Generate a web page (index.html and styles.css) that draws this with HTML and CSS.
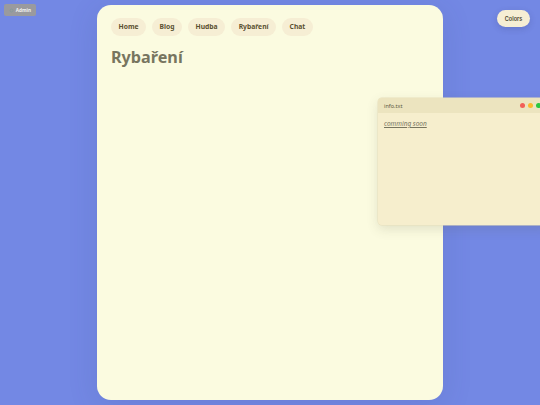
FILE: index.html
```html
<!DOCTYPE html>
<html lang="cs">
<head>
<meta charset="utf-8">
<title>Rybaření</title>
<link rel="stylesheet" href="styles.css">
</head>
<body>
<a class="admin" href="#"><svg class="admin-icon" viewBox="0 0 10 10"><circle cx="5" cy="5" r="3" fill="none" stroke="#7f9a9a" stroke-width="1.4"/></svg>Admin</a>
<button class="colors">Colors</button>
<main class="card">
  <nav class="nav">
    <a class="pill" href="#">Home</a>
    <a class="pill" href="#">Blog</a>
    <a class="pill" href="#">Hudba</a>
    <a class="pill" href="#">Rybaření</a>
    <a class="pill" href="#">Chat</a>
  </nav>
  <h1 class="title">Rybaření</h1>
</main>
<section class="window">
  <header class="titlebar">
    <span class="filename">info.txt</span>
    <span class="dots"><i class="dot red"></i><i class="dot yellow"></i><i class="dot green"></i></span>
  </header>
  <div class="window-body"><a class="soon" href="#">comming soon</a></div>
</section>
</body>
</html>
```
FILE: styles.css
```css
* { box-sizing: border-box; }
html, body { height: 100%; }
body {
  margin: 0;
  background: #7388e4;
  font-family: "Noto Sans", sans-serif;
  overflow: hidden;
  position: relative;
  padding: 5px 97px;
}
.card {
  height: 395px;
  background: #fbfbe0;
  border-radius: 14px;
  padding: 13px 14px;
  box-shadow: 0 6px 30px rgba(60, 70, 130, 0.14);
}
.nav { display: flex; gap: 6px; }
.pill {
  height: 18px;
  padding: 0 7.5px;
  border-radius: 9px;
  background: #f6eed4;
  color: #5a5030;
  font-size: 6.75px;
  font-weight: 700;
  line-height: 18px;
  text-decoration: none;
  white-space: nowrap;
}
.title {
  margin: 9px 0 0;
  font-size: 16.2px;
  line-height: 24px;
  font-weight: 700;
  color: #77755f;
}
.admin {
  position: absolute;
  left: 4px;
  top: 4px;
  width: 32px;
  height: 12px;
  display: flex;
  align-items: center;
  justify-content: flex-end;
  gap: 2px;
  padding-right: 5px;
  background: #9a9a9e;
  border-radius: 2px;
  color: #f2f2f2;
  font-size: 4.7px;
  font-weight: 700;
  text-decoration: none;
}
.admin-icon { width: 5px; height: 5px; }
.colors {
  position: absolute;
  left: 497px;
  top: 10px;
  width: 33px;
  height: 17px;
  padding: 0;
  border: 0;
  border-radius: 8.5px;
  background: #f6eed4;
  color: #4a4530;
  font-family: Inter, sans-serif;
  font-size: 5.5px;
  font-weight: 600;
  box-shadow: 0 2px 6px rgba(50, 50, 100, 0.2);
}
.window {
  position: absolute;
  left: 378px;
  top: 98px;
  width: 170px;
  height: 126.5px;
  background: #f6eecd;
  border-radius: 4px;
  box-shadow: 0 0 0 0.5px #e8e0bc, 0 4px 12px rgba(90, 90, 60, 0.16);
  overflow: hidden;
}
.titlebar {
  height: 15px;
  padding: 0 0 0 6px;
  display: flex;
  align-items: center;
  justify-content: space-between;
  background: #ece4bf;
  color: #5f5a42;
  font-size: 5.5px;
}
.dots { display: flex; gap: 3px; margin-right: 7.5px; }
.dot { width: 5px; height: 5px; border-radius: 50%; }
.red { background: #f25f57; }
.yellow { background: #fcb92e; }
.green { background: #2bc840; }
.window-body { padding: 5px 6px; font-size: 6.5px; line-height: 11px; }
.soon {
  color: #77755f;
  font-style: italic;
  text-decoration: underline;
}
```
